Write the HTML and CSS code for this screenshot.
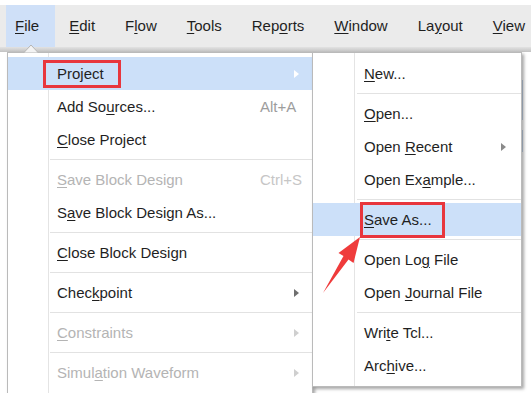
FILE: index.html
```html
<!DOCTYPE html>
<html lang="en">
<head>
  <meta charset="UTF-8" />
  <title>File menu - Project</title>
  <link rel="stylesheet" href="styles.css">
</head>
<body>
  <div class="screen">
    <nav class="menubar">
      <span class="mb-item is-open"><u>F</u>ile</span>
      <span class="mb-item"><u>E</u>dit</span>
      <span class="mb-item">F<u>l</u>ow</span>
      <span class="mb-item"><u>T</u>ools</span>
      <span class="mb-item">Rep<u>o</u>rts</span>
      <span class="mb-item"><u>W</u>indow</span>
      <span class="mb-item">La<u>y</u>out</span>
      <span class="mb-item"><u>V</u>iew</span>
    </nav>
    <div class="menubar-edge"></div>

    <div class="workspace">
      <div class="menu menu-file">
        <svg class="notch" width="16" height="9" viewBox="0 0 16 9">
          <polygon points="0.5,9 8,1 15.5,9" fill="#f3f3f3" stroke="#b5b5b5" stroke-width="1" />
        </svg>
        <div class="item is-hover"><span class="label">Pro<u>j</u>ect</span><i class="arrow"></i></div>
        <div class="item"><span class="label">Add So<u>u</u>rces...</span><span class="key">Alt+A</span></div>
        <div class="item"><span class="label"><u>C</u>lose Project</span></div>
        <div class="sep"></div>
        <div class="item is-disabled"><span class="label"><u>S</u>ave Block Design</span><span class="key">Ctrl+S</span></div>
        <div class="item"><span class="label">S<u>a</u>ve Block Design As...</span></div>
        <div class="sep"></div>
        <div class="item"><span class="label"><u>C</u>lose Block Design</span></div>
        <div class="sep"></div>
        <div class="item"><span class="label">Chec<u>k</u>point</span><i class="arrow"></i></div>
        <div class="sep"></div>
        <div class="item is-disabled"><span class="label"><u>C</u>onstraints</span><i class="arrow"></i></div>
        <div class="sep"></div>
        <div class="item is-disabled"><span class="label">Simul<u>a</u>tion Waveform</span><i class="arrow"></i></div>
      </div>

      <div class="menu menu-project">
        <div class="item"><span class="label"><u>N</u>ew...</span></div>
        <div class="sep"></div>
        <div class="item"><span class="label"><u>O</u>pen...</span></div>
        <div class="item"><span class="label">Open <u>R</u>ecent</span><i class="arrow"></i></div>
        <div class="item"><span class="label">Open Ex<u>a</u>mple...</span></div>
        <div class="sep"></div>
        <div class="item is-hover"><span class="label"><u>S</u>ave As...</span></div>
        <div class="sep"></div>
        <div class="item"><span class="label">Open Lo<u>g</u> File</span></div>
        <div class="item"><span class="label">Open <u>J</u>ournal File</span></div>
        <div class="sep"></div>
        <div class="item"><span class="label">Wri<u>t</u>e Tcl...</span></div>
        <div class="item"><span class="label">Arc<u>h</u>ive...</span></div>
      </div>

      <div class="backdrop">
        <div class="backdrop-bar"></div>
        <div class="backdrop-bar short"></div>
      </div>
    </div>

    <!-- annotations drawn on top of the screenshot -->
    <div class="mark mark-project"></div>
    <div class="mark mark-save"></div>
    <svg class="pointer" width="531" height="393" viewBox="0 0 531 393">
      <polygon points="360,237 353.5,263 348.5,259.5 323,293 343.5,256 338.5,253" fill="#ef3b3b" />
    </svg>
  </div>
</body>
</html>
```

FILE: styles.css
```css
body {
  margin: 0;
  background: #fff;
  font-family: "Liberation Sans", Arial, sans-serif;
  font-size: 15px;
  color: #1f1f1f;
}
.screen {
  position: relative;
  width: 531px;
  height: 393px;
  overflow: hidden;
  background: #fff;
}
u {
  text-underline-offset: 2px;
}

/* menu bar */
.menubar {
  display: flex;
  gap: 5px;
  margin-top: 5px;
  height: 42px;
  padding-left: 6px;
  background: #ebebeb;
  white-space: nowrap;
}
.mb-item {
  padding: 0 16px 0 9px;
  line-height: 41px;
}
.mb-item.is-open {
  background: #cfe0f8;
}
.menubar-edge {
  height: 5px;
  background: linear-gradient(#e2e2e2, #c2c2c2);
}

/* dropdowns */
.workspace {
  display: flex;
  align-items: flex-start;
  padding-left: 7px;
  height: 341px;
}
.menu {
  position: relative;
  z-index: 1;
  flex: none;
  padding: 4px 0;
  border: 1px solid #bababa;
  background: linear-gradient(to right, #fff 40px, #e4e4e4 40px, #e4e4e4 41px, #fff 41px);
  box-shadow: 2px 2px 3px rgba(0,0,0,0.35);
}
.menu-file {
  width: 306px;
  box-sizing: border-box;
}
.menu-project {
  z-index: 2;
  width: 210px;
  box-sizing: border-box;
  margin-left: -1px;
  background: linear-gradient(to right, #fff 41px, #e4e4e4 41px, #e4e4e4 42px, #fff 42px);
}
.notch {
  position: absolute;
  left: 15px;
  top: -9px;
  display: block;
}
.item {
  display: flex;
  align-items: center;
  height: 33px;
  padding-left: 49px;
  white-space: nowrap;
}
.menu-project .item {
  padding-left: 51px;
}
.label {
  flex: 1;
}
.key {
  width: 52px;
  color: #9d9d9d;
}
.arrow {
  width: 0;
  height: 0;
  margin-right: 13px;
  border-left: 5px solid #6f6f6f;
  border-top: 4.5px solid transparent;
  border-bottom: 4.5px solid transparent;
}
.menu-project .arrow {
  margin-right: 15px;
  border-left-color: #8a8a8a;
}
.item.is-hover {
  background: #cce0f9;
}
.item.is-hover .arrow {
  border-left-color: #fff;
}
.item.is-disabled {
  color: #b4b4b4;
}
.item.is-disabled .key {
  color: #c6c6c6;
}
.item.is-disabled .arrow {
  border-left-color: #cfcfcf;
}
.sep {
  height: 7px;
  margin-left: 42px;
  background: linear-gradient(transparent 3px, #e2e2e2 3px, #e2e2e2 4px, transparent 4px);
}
.menu-project .sep {
  margin-left: 44px;
}

.backdrop {
  flex: 1;
  align-self: stretch;
  padding-top: 28px;
}
.backdrop-bar {
  width: 1px;
  height: 40px;
  margin-bottom: 10px;
  background: #c9d8ec;
}
.backdrop-bar.short {
  height: 22px;
}

/* red annotations */
.mark {
  position: absolute;
  z-index: 5;
  box-sizing: border-box;
  border: 3px solid #e8363d;
}
.mark-project {
  left: 43px;
  top: 60px;
  width: 78px;
  height: 28px;
}
.mark-save {
  left: 360px;
  top: 202px;
  width: 85px;
  height: 36px;
}
.pointer {
  position: absolute;
  z-index: 6;
  left: 0;
  top: 0;
}
```
